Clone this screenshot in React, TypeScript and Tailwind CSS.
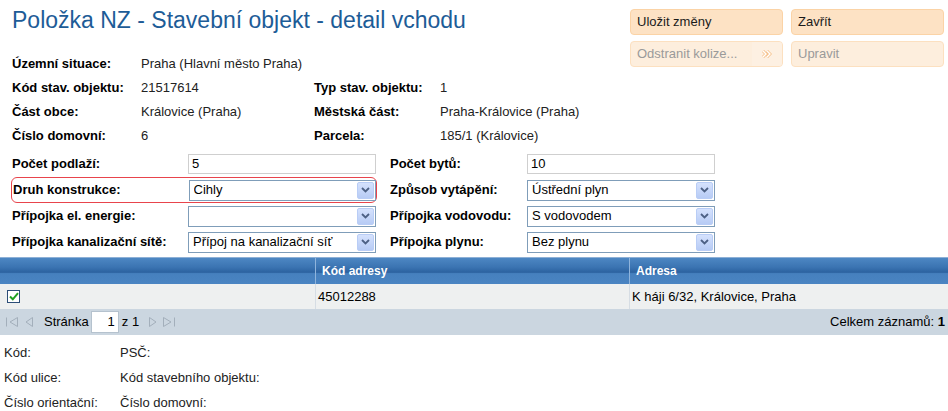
import { FC, ReactNode } from 'react'

const font = { fontFamily: '"Liberation Sans", Arial, sans-serif' }

const Chevron: FC = () => (
	<svg width="9" height="6" viewBox="0 0 9 6">
		<path d="M1 1 L4.5 4.5 L8 1" fill="none" stroke="#4d6185" strokeWidth="1.8" />
	</svg>
)

const Select: FC<{ value?: string }> = ({ value }) => (
	<div className="flex h-[21px] w-[188px] items-center border border-[#7f9db9] bg-white pl-[4px] pr-[1px]">
		<span className="flex-1 truncate text-[13px] text-black">{value}</span>
		<span className="flex h-[17px] w-[17px] items-center justify-center rounded-[2px] border border-[#b9cdf6] bg-[linear-gradient(to_bottom,#d5e2fd,#b7cbf5)]">
			<Chevron />
		</span>
	</div>
)

const Input: FC<{ value: string }> = ({ value }) => (
	<div className="flex h-[20px] w-[188px] items-center border border-[#cfcfcf] bg-white px-[3px] text-[13px] text-black">
		{value}
	</div>
)

const Btn: FC<{ children: ReactNode; disabled?: boolean; arrows?: boolean }> = ({ children, disabled, arrows }) => (
	<div
		className={`flex h-[26px] w-[153px] items-center overflow-hidden rounded-[4px] border pl-[6px] text-[13px] ${
			disabled
				? 'border-[#fce0c0] bg-[#fdeedd] text-[#9a9a9a]'
				: 'border-[#fbd3a6] bg-[#fde2c4] text-[#1a1a1a]'
		}`}
	>
		<span className="flex-1">{children}</span>
		{arrows && (
			<span className="flex h-full w-[30px] items-center justify-center bg-[#fdf0e2]">
				<svg width="10" height="8" viewBox="0 0 10 8">
					<path d="M1 1 L4 4 L1 7 M5 1 L8 4 L5 7" fill="none" stroke="#f6c08a" strokeWidth="3" />
					<path d="M1 1 L4 4 L1 7 M5 1 L8 4 L5 7" fill="none" stroke="#ffffff" strokeWidth="1.4" />
				</svg>
			</span>
		)}
	</div>
)

const Info: FC<{ label: string; value: string; w: string }> = ({ label, value, w }) => (
	<div className="flex h-full items-center">
		<span className={`${w} font-bold text-black`}>{label}</span>
		<span className="text-[#222]">{value}</span>
	</div>
)

const FormRow: FC<{ label: string; children: ReactNode; hl?: boolean }> = ({ label, children, hl }) => (
	<div className={`flex h-[26px] items-center ${hl ? 'rounded-[6px] border border-[#e8444c] -ml-[1px] pl-[1px] w-[366px]' : ''}`}>
		<span className="w-[176px] text-[13px] font-bold text-black">{label}</span>
		{children}
	</div>
)

const FormRow2: FC<{ label: string; children: ReactNode }> = ({ label, children }) => (
	<div className="flex h-[26px] items-center">
		<span className="w-[137px] text-[13px] font-bold text-black">{label}</span>
		{children}
	</div>
)

const PagerIcon: FC<{ d: string; w?: number }> = ({ d, w = 10 }) => (
	<svg width={w} height="16" viewBox={`0 0 ${w} 16`}>
		<path d={d} fill="none" stroke="#a3afbb" strokeWidth="1" />
	</svg>
)

const App: FC = () => {
	return (
		<div className="h-[411px] w-[948px] overflow-hidden bg-white text-[13px]" style={font}>
			<div className="flex">
				<div className="w-[630px] pl-[12px]">
					<h1 className="mt-[6px] text-[23px] leading-[28px] text-[#1d5c97]">
						Položka NZ - Stavební objekt - detail vchodu
					</h1>
					<div className="mt-[18px] flex flex-col">
						<div className="h-[24px]">
							<Info label="Územní situace:" value="Praha (Hlavní město Praha)" w="w-[129px]" />
						</div>
						<div className="flex h-[24px]">
							<div className="w-[302px]">
								<Info label="Kód stav. objektu:" value="21517614" w="w-[129px]" />
							</div>
							<Info label="Typ stav. objektu:" value="1" w="w-[126px]" />
						</div>
						<div className="flex h-[24px]">
							<div className="w-[302px]">
								<Info label="Část obce:" value="Královice (Praha)" w="w-[129px]" />
							</div>
							<Info label="Městská část:" value="Praha-Královice (Praha)" w="w-[126px]" />
						</div>
						<div className="flex h-[24px]">
							<div className="w-[302px]">
								<Info label="Číslo domovní:" value="6" w="w-[129px]" />
							</div>
							<Info label="Parcela:" value="185/1 (Královice)" w="w-[126px]" />
						</div>
					</div>
				</div>
				<div className="mt-[9px] grid h-fit grid-cols-2 gap-x-[8px] gap-y-[6px]">
					<Btn>Uložit změny</Btn>
					<Btn>Zavřít</Btn>
					<Btn disabled arrows>
						Odstranit kolize...
					</Btn>
					<Btn disabled>Upravit</Btn>
				</div>
			</div>

			<div className="mt-[3px] flex pl-[12px]">
				<div className="w-[378px]">
					<FormRow label="Počet podlaží:">
						<Input value="5" />
					</FormRow>
					<FormRow label="Druh konstrukce:" hl>
						<Select value="Cihly" />
					</FormRow>
					<FormRow label="Přípojka el. energie:">
						<Select />
					</FormRow>
					<FormRow label="Přípojka kanalizační sítě:">
						<Select value="Přípoj na kanalizační síť" />
					</FormRow>
				</div>
				<div>
					<FormRow2 label="Počet bytů:">
						<Input value="10" />
					</FormRow2>
					<FormRow2 label="Způsob vytápění:">
						<Select value="Ústřední plyn" />
					</FormRow2>
					<FormRow2 label="Přípojka vodovodu:">
						<Select value="S vodovodem" />
					</FormRow2>
					<FormRow2 label="Přípojka plynu:">
						<Select value="Bez plynu" />
					</FormRow2>
				</div>
			</div>

			<div className="mt-[2px]">
				<div className="grid h-[27px] grid-cols-[316px_314px_1fr] border-t border-[#8db0d6] bg-[linear-gradient(to_bottom,#4d87c3_0%,#3b74b2_35%,#2c62a0_55%,#4680be_60%,#4a84c2_100%)] text-[12px] font-bold text-white">
					<div className="border-r border-[#8fb4dc]" />
					<div className="flex items-center border-r border-[#8fb4dc] pl-[6px]">Kód adresy</div>
					<div className="flex items-center pl-[6px]">Adresa</div>
				</div>
				<div className="grid h-[25px] grid-cols-[316px_314px_1fr] bg-[#eef0f0] text-[13px] text-black">
					<div className="flex items-center border-r border-[#d6dde4] pl-[7px]">
						<span className="flex h-[13px] w-[13px] items-center justify-center border border-[#2c4e78] bg-white">
							<svg width="10" height="9" viewBox="0 0 10 9">
								<path d="M1 4.5 L3.8 7.3 L9 1.2" fill="none" stroke="#1ea021" strokeWidth="2" />
							</svg>
						</span>
					</div>
					<div className="flex items-center border-r border-[#d6dde4] pl-[2px]">45012288</div>
					<div className="flex items-center pl-[2px]">K háji 6/32, Královice, Praha</div>
				</div>
				<div className="flex h-[26px] items-center bg-[#cbd6e0] pl-[5px] pr-[3px] text-[13px] text-black">
					<PagerIcon w={14} d="M1.5 3.5 V12.5 M12.5 3.5 L5 8 L12.5 12.5 Z" />
					<span className="w-[5px]" />
					<PagerIcon d="M8.5 3.5 L2 8 L8.5 12.5 Z" />
					<span className="ml-[10px]">Stránka</span>
					<div className="ml-[2px] flex h-[22px] w-[28px] items-center justify-end border border-[#b5c2ce] bg-white pr-[3px]">
						1
					</div>
					<span className="ml-[3px]">z 1</span>
					<span className="w-[9px]" />
					<PagerIcon d="M1.5 3.5 L8 8 L1.5 12.5 Z" />
					<span className="w-[4px]" />
					<PagerIcon w={14} d="M1.5 3.5 L9 8 L1.5 12.5 Z M12.5 3.5 V12.5" />
					<span className="flex-1" />
					<span>
						Celkem záznamů: <b>1</b>
					</span>
				</div>
			</div>

			<div className="mt-[5px] pl-[4px] text-[13px] text-[#222]">
				<div className="flex h-[25px] items-center">
					<span className="w-[116px]">Kód:</span>
					<span>PSČ:</span>
				</div>
				<div className="flex h-[25px] items-center">
					<span className="w-[116px]">Kód ulice:</span>
					<span>Kód stavebního objektu:</span>
				</div>
				<div className="flex h-[25px] items-center">
					<span className="w-[116px]">Číslo orientační:</span>
					<span>Číslo domovní:</span>
				</div>
			</div>
		</div>
	)
}

export default App
